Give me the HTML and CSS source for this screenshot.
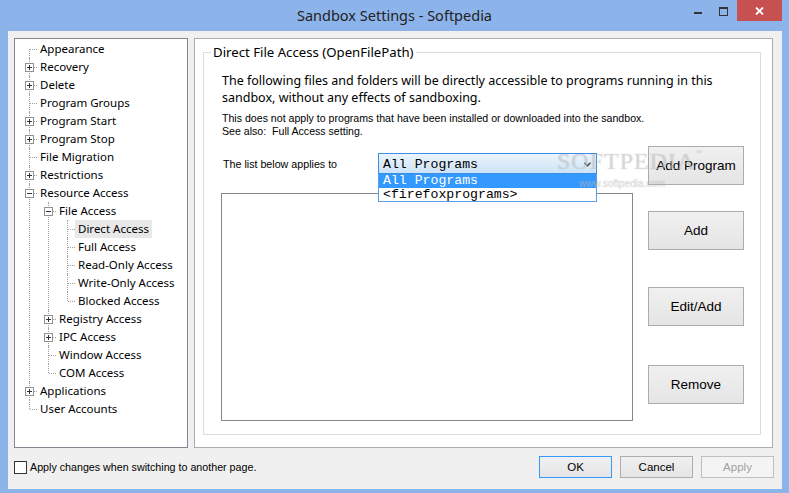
FILE: index.html
```html
<!DOCTYPE html>
<html lang="en">

<head>
    <meta charset="UTF-8">
    <meta name="viewport" content="width=device-width, initial-scale=1.0">
    <title>Sandbox Settings - Softpedia</title>
    <link rel="stylesheet" href="styles.css">
</head>

<body>

    <div class="window">
        <div class="titlebar">
            <span class="title">Sandbox Settings - Softpedia</span>
            <span class="ctl ctl-min"></span>
            <span class="ctl ctl-max"></span>
            <span class="ctl ctl-close">
                <svg width="9" height="8" viewBox="0 0 9 8"><path d="M1 0.5 L8 7.5 M8 0.5 L1 7.5" stroke="#fff" stroke-width="1.8" fill="none"/></svg>
            </span>
        </div>

        <div class="client">
            <div class="main">
                <!-- settings tree -->
                <div class="tree">
                    <ul class="tree-root">
                        <li><div class="row"><span class="label">Appearance</span></div></li>
                        <li><span class="tg plus"></span><div class="row"><span class="label">Recovery</span></div></li>
                        <li><span class="tg plus"></span><div class="row"><span class="label">Delete</span></div></li>
                        <li><div class="row"><span class="label">Program Groups</span></div></li>
                        <li><span class="tg plus"></span><div class="row"><span class="label">Program Start</span></div></li>
                        <li><span class="tg plus"></span><div class="row"><span class="label">Program Stop</span></div></li>
                        <li><div class="row"><span class="label">File Migration</span></div></li>
                        <li><span class="tg plus"></span><div class="row"><span class="label">Restrictions</span></div></li>
                        <li>
                            <span class="tg minus"></span><div class="row"><span class="label">Resource Access</span></div>
                            <ul>
                                <li>
                                    <span class="tg minus"></span><div class="row"><span class="label">File Access</span></div>
                                    <ul>
                                        <li><div class="row"><span class="label selected">Direct Access</span></div></li>
                                        <li><div class="row"><span class="label">Full Access</span></div></li>
                                        <li><div class="row"><span class="label">Read-Only Access</span></div></li>
                                        <li><div class="row"><span class="label">Write-Only Access</span></div></li>
                                        <li><div class="row"><span class="label">Blocked Access</span></div></li>
                                    </ul>
                                </li>
                                <li><span class="tg plus"></span><div class="row"><span class="label">Registry Access</span></div></li>
                                <li><span class="tg plus"></span><div class="row"><span class="label">IPC Access</span></div></li>
                                <li><div class="row"><span class="label">Window Access</span></div></li>
                                <li><div class="row"><span class="label">COM Access</span></div></li>
                            </ul>
                        </li>
                        <li><span class="tg plus"></span><div class="row"><span class="label">Applications</span></div></li>
                        <li><div class="row"><span class="label">User Accounts</span></div></li>
                    </ul>
                </div>

                <!-- settings page -->
                <div class="page">
                    <fieldset class="group">
                        <legend>Direct File Access (OpenFilePath)</legend>
                        <p class="intro">The following files and folders will be directly accessible to programs running in this sandbox, without any effects of sandboxing.</p>
                        <p class="note">This does not apply to programs that have been installed or downloaded into the sandbox.<br>See also:&nbsp; Full Access setting.</p>

                        <div class="work">
                            <div class="lists">
                                <div class="applies">
                                    <span class="applies-label">The list below applies to</span>
                                    <div class="combo">
                                        <span>All Programs</span>
                                        <svg class="combo-arrow" width="7" height="5" viewBox="0 0 7 5"><path d="M0.5 0.8 L3.5 3.8 L6.5 0.8" stroke="#444" stroke-width="1.3" fill="none"/></svg>
                                        <div class="combo-list">
                                            <div class="option active">All Programs</div>
                                            <div class="option">&lt;firefoxprograms&gt;</div>
                                        </div>
                                    </div>
                                </div>
                                <div class="listbox"></div>
                            </div>
                            <div class="side-buttons">
                                <button class="btn btn-add-program">Add Program</button>
                                <button class="btn btn-add">Add</button>
                                <button class="btn btn-edit">Edit/Add</button>
                                <button class="btn btn-remove">Remove</button>
                            </div>
                        </div>
                    </fieldset>
                </div>
            </div>

            <div class="footer">
                <label class="check"><span class="box"></span>Apply changes when switching to another page.</label>
                <div class="footer-buttons">
                    <button class="fbtn default">OK</button>
                    <button class="fbtn">Cancel</button>
                    <button class="fbtn" disabled>Apply</button>
                </div>
            </div>
        </div>

        <div class="watermark">SOFTPEDIA<sup>™</sup><small>www.softpedia.com</small></div>
    </div>

</body>

</html>
```

FILE: styles.css
```css
/* Window frame */
body {
    margin: 0;
    background-color: #8cb3ea;
    font-family: 'Noto Sans', sans-serif;
    color: #000000;
}

.window {
    position: relative;
    width: 789px;
    height: 493px;
    box-sizing: border-box;
    padding: 0 7px 4px 8px;
    background-color: #8cb3ea;
    display: flex;
    flex-direction: column;
    overflow: hidden;
}

.titlebar {
    height: 31px;
    margin: 0 -7px 0 -8px;
    text-align: center;
    line-height: 30px;
    font-size: 14.5px;
    color: #222222;
}

.ctl {
    position: absolute;
    top: 0;
}

.ctl-min {
    left: 694px;
    top: 12px;
    width: 8px;
    height: 2px;
    background-color: #333;
}

.ctl-max {
    left: 719px;
    top: 7px;
    width: 7px;
    height: 6px;
    border: 1px solid #333;
    border-top-width: 2px;
}

.ctl-close {
    right: 7px;
    width: 45px;
    height: 21px;
    background-color: #c75050;
    display: flex;
    justify-content: center;
    align-items: center;
}

.client {
    flex: 1;
    background-color: #f0f0f0;
    padding: 7px 9px 0 6px;
    display: flex;
    flex-direction: column;
}

.main {
    display: flex;
    gap: 6px;
    height: 410px;
}

/* Tree */
.tree {
    width: 174px;
    box-sizing: border-box;
    border: 1px solid #828790;
    background-color: #ffffff;
    padding-top: 1px;
    font-size: 11.5px;
}

.tree ul {
    list-style: none;
    margin: 0;
    padding: 0 0 0 19px;
}

.tree ul.tree-root {
    padding-left: 0;
}

.tree li {
    position: relative;
}

.tree li::before {
    content: "";
    position: absolute;
    left: 14px;
    top: 0;
    bottom: 0;
    border-left: 1px dotted #a0a0a0;
}

.tree-root > li:first-child::before {
    top: 9px;
}

.tree li:last-child::before {
    bottom: auto;
    height: 9px;
}

.tree li::after {
    content: "";
    position: absolute;
    left: 15px;
    top: 9px;
    width: 7px;
    border-top: 1px dotted #a0a0a0;
}

.row {
    height: 18px;
    padding-left: 22px;
    display: flex;
    align-items: center;
}

.label {
    padding: 0 3px;
    line-height: 18px;
    white-space: nowrap;
}

.label.selected {
    background-color: #e8e8e8;
}

.tg {
    position: absolute;
    left: 10px;
    top: 5px;
    width: 7px;
    height: 7px;
    border: 1px solid #919191;
    background: #ffffff;
    z-index: 1;
}

.tg::before,
.tg::after {
    content: "";
    position: absolute;
    background-color: #333;
}

.tg::before {
    left: 1px;
    top: 3px;
    width: 5px;
    height: 1px;
}

.tg.plus::after {
    left: 3px;
    top: 1px;
    width: 1px;
    height: 5px;
}

/* Page */
.page {
    flex: 1;
    border: 1px solid #adadad;
    background-color: #ffffff;
    padding: 5px 11px 12px 8px;
    display: flex;
    flex-direction: column;
}

.group {
    flex: 1;
    margin: 0;
    padding: 0 16px 0 18px;
    border: 1px solid #dcdcdc;
    min-width: 0;
}

.group legend {
    margin-left: -11px;
    padding: 0 2px;
    font-size: 13.2px;
    line-height: 17px;
}

.intro {
    margin: 11px 0 0;
    font-size: 12.5px;
    line-height: 17px;
}

.note {
    margin: 6px 0 0;
    font-family: 'Liberation Sans', sans-serif;
    font-size: 10.6px;
    line-height: 13px;
}

.work {
    display: flex;
    gap: 15px;
    margin-top: 8px;
}

.lists {
    width: 411px;
}

.applies {
    display: flex;
    align-items: center;
    height: 21px;
    margin-top: 7px;
    font-family: 'Liberation Sans', sans-serif;
    font-size: 10.7px;
}

.applies-label {
    width: 155px;
    padding-left: 1px;
}

.combo {
    position: relative;
    width: 219px;
    height: 21px;
    box-sizing: border-box;
    border: 1px solid #3c8ee6;
    background: linear-gradient(#ecf4fc, #cce3f7);
    padding: 1px 0 0 4px;
    display: flex;
    align-items: center;
    font-family: 'Liberation Mono', monospace;
    font-size: 13.2px;
}

.combo-arrow {
    position: absolute;
    right: 5px;
    top: 8px;
}

.combo-list {
    position: absolute;
    left: -1px;
    right: -1px;
    top: 100%;
    margin-top: 1px;
    background-color: #ffffff;
    border: 1px solid #5a9ee6;
    border-top: none;
    z-index: 2;
}

.option {
    height: 13px;
    line-height: 13px;
    padding-left: 4px;
    overflow: hidden;
}

.option.active {
    height: 14px;
    line-height: 14px;
    background-color: #3399ff;
    color: #ffffff;
}

.listbox {
    margin: 19px 0 0 -1px;
    width: 412px;
    height: 228px;
    box-sizing: border-box;
    border: 1px solid #828790;
    background-color: #ffffff;
}

.side-buttons {
    display: flex;
    flex-direction: column;
}

.btn {
    width: 96px;
    height: 39px;
    border: 1px solid #acacac;
    background: linear-gradient(#f0f0f0, #e5e5e5);
    font-family: 'Liberation Sans', sans-serif;
    font-size: 13.5px;
    color: #000000;
    padding: 0;
}

.btn-add {
    margin-top: 26px;
}

.btn-edit {
    margin-top: 37px;
}

.btn-remove {
    margin-top: 39px;
}

/* Footer */
.footer {
    display: flex;
    justify-content: space-between;
    align-items: center;
    padding-top: 8px;
    margin-right: -1px;
    font-family: 'Liberation Sans', sans-serif;
    font-size: 10.7px;
}

.check {
    display: flex;
    align-items: center;
    gap: 3px;
}

.box {
    width: 11px;
    height: 11px;
    border: 1px solid #333333;
    background-color: #ffffff;
}

.footer-buttons {
    display: flex;
    gap: 8px;
}

.fbtn {
    width: 73px;
    height: 22px;
    border: 1px solid #adadad;
    background: linear-gradient(#f0f0f0, #e5e5e5);
    font-family: 'Liberation Sans', sans-serif;
    font-size: 11.5px;
    color: #000000;
    padding: 0;
}

.fbtn.default {
    border-color: #3399ff;
}

.fbtn:disabled {
    border-color: #bfbfbf;
    background: #f4f4f4;
    color: #a0a0a0;
}

/* Watermark overlay */
.watermark {
    position: absolute;
    left: 557px;
    top: 148px;
    font-family: 'Liberation Serif', serif;
    font-size: 24px;
    letter-spacing: 1px;
    color: rgba(255, 255, 255, 0.35);
    text-shadow: 0 0 1px rgba(110, 110, 110, 0.45);
    pointer-events: none;
    z-index: 5;
}

.watermark sup {
    font-size: 7px;
    vertical-align: 14px;
}

.watermark small {
    position: absolute;
    left: 22px;
    top: 30px;
    font-family: 'Liberation Sans', sans-serif;
    font-size: 10px;
    letter-spacing: 0;
    white-space: nowrap;
}
```
